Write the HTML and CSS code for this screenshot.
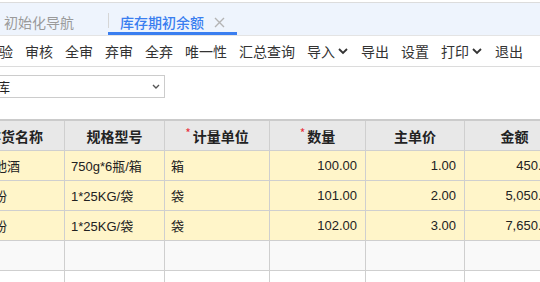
FILE: index.html
```html
<!DOCTYPE html>
<html lang="zh-CN">
<head>
  <meta charset="UTF-8" />
  <title>库存期初余额</title>
  <link rel="stylesheet" href="styles.css">
</head>
<body>
  <div class="tabs">
    <div class="tab">初始化导航</div>
    <div class="tab activo">
      <span>库存期初余额</span>
      <svg class="cerrar" width="11" height="11" viewBox="0 0 11 11"><path d="M1 1L10 10M10 1L1 10" stroke="#b4b4b4" stroke-width="1.4" fill="none"/></svg>
    </div>
  </div>

  <div class="toolbar">
    <span>检验</span>
    <span>审核</span>
    <span>全审</span>
    <span>弃审</span>
    <span>全弃</span>
    <span>唯一性</span>
    <span>汇总查询</span>
    <span class="menu">导入<svg width="12" height="8" viewBox="0 0 12 8"><path d="M2 2L6 6L10 2" stroke="#333" stroke-width="1.8" fill="none"/></svg></span>
    <span>导出</span>
    <span>设置</span>
    <span class="menu">打印<svg width="12" height="8" viewBox="0 0 12 8"><path d="M2 2L6 6L10 2" stroke="#333" stroke-width="1.8" fill="none"/></svg></span>
    <span>退出</span>
  </div>

  <div class="filtro">
    <div class="selector">
      <span>原料仓库</span>
      <svg width="8" height="6" viewBox="0 0 8 6"><path d="M1 1L4 4L7 1" stroke="#555" stroke-width="1.4" fill="none"/></svg>
    </div>
  </div>

  <div class="tabla">
    <div class="fila cabecera">
      <div>存货名称</div>
      <div>规格型号</div>
      <div><i>*</i>计量单位</div>
      <div><i>*</i>数量</div>
      <div>主单价</div>
      <div>金额</div>
    </div>
    <div class="fila datos">
      <div class="nombre">青岛池酒</div>
      <div class="izq">750g*6瓶/箱</div>
      <div class="izq">箱</div>
      <div class="num">100.00</div>
      <div class="num">1.00</div>
      <div class="num">450.00</div>
    </div>
    <div class="fila datos">
      <div class="nombre">高筋粉</div>
      <div class="izq">1*25KG/袋</div>
      <div class="izq">袋</div>
      <div class="num">101.00</div>
      <div class="num">2.00</div>
      <div class="num">5,050.00</div>
    </div>
    <div class="fila datos">
      <div class="nombre">低筋粉</div>
      <div class="izq">1*25KG/袋</div>
      <div class="izq">袋</div>
      <div class="num">102.00</div>
      <div class="num">3.00</div>
      <div class="num">7,650.00</div>
    </div>
    <div class="fila vacia">
      <div></div><div></div><div></div><div></div><div></div><div></div>
    </div>
    <div class="fila blanca">
      <div></div><div></div><div></div><div></div><div></div><div></div>
    </div>
  </div>
</body>
</html>
```

FILE: styles.css
```css
html, body {
  height: 282px;
}
body {
  margin: 0;
  font-family: "Noto Sans CJK SC", "Liberation Sans", sans-serif;
  color: #333;
  background-color: #fff;
  overflow: hidden;
}
.tabs {
  margin-top: 2px;
  height: 32px;
  display: flex;
  background-color: #eef4fd;
  border-top: 1px solid #dcdcdc;
  border-bottom: 1px solid #e4e4e4;
}
.tab {
  font-size: 14px;
  line-height: 20px;
  padding: 9px 34px 0 4px;
  color: #9a9a9a;
}
.tab.activo {
  position: relative;
  display: flex;
  align-items: flex-start;
  padding: 9px 12px 0 12px;
  color: #3a7ef0;
  font-weight: 500;
  box-sizing: border-box;
  border-bottom: 3px solid #3a7ef0;
  height: 32px;
}
.tab.activo::before {
  content: "";
  position: absolute;
  left: 0;
  top: 10px;
  height: 15px;
  border-left: 1px solid #d6d6d6;
}
.cerrar {
  margin: 5px 0 0 10px;
}
.toolbar {
  height: 30px;
  display: flex;
  align-items: center;
  gap: 12px;
  margin-left: -15px;
  font-size: 14px;
  border-bottom: 1px solid #dcdcdc;
}
.menu {
  display: flex;
  align-items: center;
}
.menu svg {
  margin-left: 2px;
}
.filtro {
  padding-top: 8px;
  height: 23px;
}
.selector {
  margin-left: -48px;
  width: 213px;
  height: 23px;
  box-sizing: border-box;
  border: 1px solid #cccccc;
  display: flex;
  align-items: center;
  justify-content: space-between;
  padding: 0 4px 0 5px;
  font-size: 13px;
  color: #222;
}
.tabla {
  margin-top: 21px;
  margin-left: -34px;
  border-top: 2px solid #cbcbcb;
  font-family: "Liberation Sans", "Noto Sans CJK SC", sans-serif;
  font-size: 13px;
}
.fila {
  display: grid;
  grid-template-columns: 99px 100px 105px 96px 99px 100px;
  height: 30px;
}
.fila div {
  box-sizing: border-box;
  border-right: 1px solid #cfcfcf;
  border-bottom: 1px solid #cfcfcf;
  display: flex;
  align-items: center;
  white-space: nowrap;
  overflow: hidden;
}
.cabecera {
  background-color: #e8e8e8;
  font-family: "Noto Sans CJK SC", sans-serif;
  font-size: 14px;
  font-weight: bold;
  color: #222;
}
.cabecera div {
  justify-content: center;
}
.cabecera i {
  font-style: normal;
  font-weight: normal;
  color: #e8313b;
  font-size: 12px;
  margin: -7px 2px 0 0;
}
.datos {
  background-color: #fff5c9;
  color: #222;
}
.nombre {
  padding-left: 2px;
}
.izq {
  padding-left: 6px;
}
.num {
  justify-content: flex-end;
  padding-right: 8px;
}
.vacia {
  background-color: #f9f9f9;
}
```
